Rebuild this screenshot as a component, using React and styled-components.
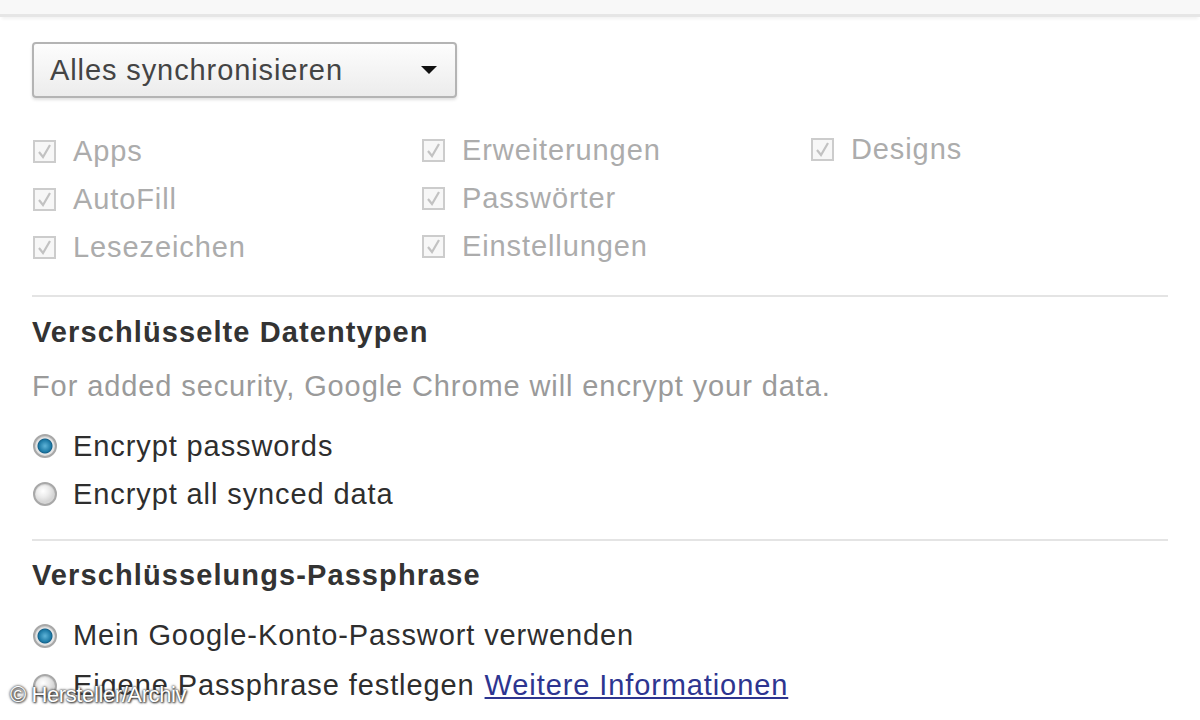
import React from 'react';
import styled, { createGlobalStyle } from 'styled-components';

const GlobalStyle = createGlobalStyle`
  html, body {
    margin: 0;
    padding: 0;
    background: #ffffff;
  }
  body {
    font-family: "Liberation Sans", Arial, sans-serif;
    color: #333333;
  }
`;

const Page = styled.div`
  position: relative;
  width: 1200px;
  height: 720px;
  overflow: hidden;
  background: #ffffff;
`;

const TopBar = styled.div`
  height: 14px;
  background: #f8f8f8;
  border-bottom: 3px solid #e6e6e6;
  box-shadow: 0 4px 3px -2px #f2f2f2;
`;

const Content = styled.div`
  padding: 25px 32px 0 32px;
  width: 1136px;
`;

const Select = styled.div`
  box-sizing: border-box;
  width: 425px;
  height: 56px;
  display: flex;
  align-items: center;
  justify-content: space-between;
  padding: 0 18px 0 16px;
  border: 2px solid #b4b4b4;
  border-radius: 4px;
  background: linear-gradient(#fdfdfd, #ececec);
  box-shadow: 0 2px 3px rgba(0, 0, 0, 0.12);
  font-size: 29px;
  letter-spacing: 0.9px;
  color: #444444;
`;

const Arrow = styled.span`
  width: 0;
  height: 0;
  border-left: 8px solid transparent;
  border-right: 8px solid transparent;
  border-top: 8px solid #111111;
`;

const CheckGrid = styled.div`
  margin-top: 27px;
  display: grid;
  grid-template-columns: 389px 389px 389px;
  grid-template-rows: repeat(3, 48px);
  grid-auto-flow: column;
`;

const CheckItem = styled.label`
  display: flex;
  align-items: center;
  gap: 17px;
  padding-left: 1px;
  font-size: 29px;
  letter-spacing: 0.9px;
  color: #acacac;
  margin-top: ${({ shift }) => shift || 0}px;
`;

const Box = styled.span`
  box-sizing: border-box;
  width: 23px;
  height: 23px;
  border: 2px solid #cccccc;
  background: #f7f7f7;
  display: flex;
  align-items: center;
  justify-content: center;
`;

const Separator = styled.div`
  height: 2px;
  background: #e4e4e4;
  margin-top: ${({ top }) => top}px;
`;

const Heading = styled.div`
  margin-top: ${({ top }) => top}px;
  height: 40px;
  line-height: 40px;
  font-size: 29px;
  font-weight: bold;
  letter-spacing: 1.1px;
  color: #333333;
`;

const Description = styled.div`
  margin-top: 14px;
  height: 40px;
  line-height: 40px;
  font-size: 29px;
  letter-spacing: 0.9px;
  color: #9a9a9a;
`;

const RadioList = styled.div`
  margin-top: ${({ top }) => top}px;
  display: flex;
  flex-direction: column;
`;

const RadioRow = styled.label`
  height: ${({ h }) => h || 48}px;
  display: flex;
  align-items: center;
  gap: 16px;
  padding-left: 1px;
  font-size: 29px;
  letter-spacing: 0.9px;
  color: #2e2e2e;
`;

const Radio = styled.span`
  box-sizing: border-box;
  width: 24px;
  height: 24px;
  border-radius: 50%;
  border: 2px solid #a8a8a8;
  background: ${({ checked }) =>
    checked
      ? 'radial-gradient(circle, #5fb4d8 0, #1d7aa6 6px, #16628a 7px, #e9e9e9 8px, #d4d4d4 11px)'
      : 'radial-gradient(circle at 40% 35%, #ffffff 0, #ececec 6px, #d6d6d6 11px)'};
  box-shadow: inset 0 1px 1px rgba(0, 0, 0, 0.1);
`;

const Link = styled.a`
  color: #2d3590;
  text-decoration: underline;
  margin-left: 10px;
`;

const Watermark = styled.div`
  position: absolute;
  left: 10px;
  bottom: 12px;
  font-size: 22px;
  letter-spacing: -0.4px;
  color: #ffffff;
  text-shadow: 0 0 2px #333, 0 0 3px #555, 1px 1px 2px #444;
`;

const Check = () => (
  <svg width="17" height="17" viewBox="0 0 17 17">
    <path d="M3 9 L7 14 L14 2" fill="none" stroke="#c2c2c2" strokeWidth="2.2" />
  </svg>
);

const checks = [
  { label: 'Apps', shift: 4 },
  { label: 'AutoFill', shift: 4 },
  { label: 'Lesezeichen', shift: 4 },
  { label: 'Erweiterungen', shift: 2 },
  { label: 'Passwörter', shift: 2 },
  { label: 'Einstellungen', shift: 2 },
  { label: 'Designs', shift: 0 },
];

export default function App() {
  return (
    <Page>
      <GlobalStyle />
      <TopBar />
      <Content>
        <Select>
          Alles synchronisieren
          <Arrow />
        </Select>

        <CheckGrid>
          {checks.map((c) => (
            <CheckItem key={c.label} shift={c.shift}>
              <Box>
                <Check />
              </Box>
              {c.label}
            </CheckItem>
          ))}
        </CheckGrid>

        <Separator top={26} />

        <Heading top={15}>Verschlüsselte Datentypen</Heading>
        <Description>For added security, Google Chrome will encrypt your data.</Description>

        <RadioList top={16}>
          <RadioRow>
            <Radio checked />
            Encrypt passwords
          </RadioRow>
          <RadioRow>
            <Radio />
            Encrypt all synced data
          </RadioRow>
        </RadioList>

        <Separator top={21} />

        <Heading top={14}>Verschlüsselungs-Passphrase</Heading>

        <RadioList top={16}>
          <RadioRow h={49}>
            <Radio checked />
            Mein Google-Konto-Passwort verwenden
          </RadioRow>
          <RadioRow h={51}>
            <Radio />
            <span>
              Eigene Passphrase festlegen
              <Link href="#">Weitere Informationen</Link>
            </span>
          </RadioRow>
        </RadioList>
      </Content>
      <Watermark>© Hersteller/Archiv</Watermark>
    </Page>
  );
}
